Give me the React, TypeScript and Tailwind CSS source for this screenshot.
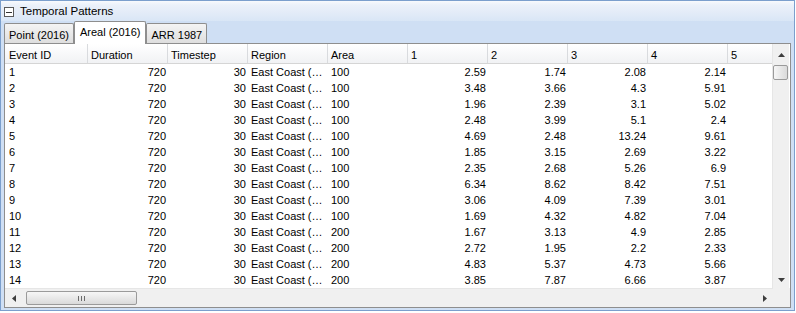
import React from 'react';

type Row = [number, number, string, string, string, string];

const rows: Row[] = [
    [1, 100, '2.59', '1.74', '2.08', '2.14'],
    [2, 100, '3.48', '3.66', '4.3', '5.91'],
    [3, 100, '1.96', '2.39', '3.1', '5.02'],
    [4, 100, '2.48', '3.99', '5.1', '2.4'],
    [5, 100, '4.69', '2.48', '13.24', '9.61'],
    [6, 100, '1.85', '3.15', '2.69', '3.22'],
    [7, 100, '2.35', '2.68', '5.26', '6.9'],
    [8, 100, '6.34', '8.62', '8.42', '7.51'],
    [9, 100, '3.06', '4.09', '7.39', '3.01'],
    [10, 100, '1.69', '4.32', '4.82', '7.04'],
    [11, 200, '1.67', '3.13', '4.9', '2.85'],
    [12, 200, '2.72', '1.95', '2.2', '2.33'],
    [13, 200, '4.83', '5.37', '4.73', '5.66'],
    [14, 200, '3.85', '7.87', '6.66', '3.87'],
];

const headers = ['Duration', 'Timestep', 'Region', 'Area', '1', '2', '3', '4', '5'];

const Arrow = ({ dir }: { dir: 'up' | 'down' | 'left' | 'right' }) => {
    const pts = {
        up: '0,4 7,4 3.5,0',
        down: '0,0 7,0 3.5,4',
        left: '4,0 4,7 0,3.5',
        right: '0,0 0,7 4,3.5',
    }[dir];
    const vertical = dir === 'up' || dir === 'down';
    return (
        <svg width={vertical ? 7 : 4} height={vertical ? 4 : 7} viewBox={vertical ? '0 0 7 4' : '0 0 4 7'}>
            <polygon points={pts} fill="#3d3d3d" />
        </svg>
    );
};

const Tab = ({ label, active }: { label: string; active?: boolean }) => (
    <div
        className={
            active
                ? 'h-[23px] -mb-px px-[5px] pt-[5px] bg-white border border-b-0 border-[#8e8e8e] rounded-t-[2px] z-10 relative'
                : 'h-[20px] px-[4px] pt-[6px] bg-[linear-gradient(to_bottom,#f4f4f4,#dedede)] border border-b-0 border-[#8e8e8e] rounded-t-[2px]'
        }
    >
        {label}
    </div>
);

export default function App() {
    return (
        <div className="w-[796px] h-[313px] bg-white text-[11px] text-black font-['Liberation_Sans',Arial,sans-serif] leading-none">
            <div className="w-[795px] h-[311px] border border-[#7b9fcd] flex flex-col bg-[#cfdff4]">
                {/* Title bar */}
                <div className="h-[20px] shrink-0 flex items-center gap-[6px] pl-[3px] pt-[2px] bg-[linear-gradient(to_bottom,#f8fafd_0%,#ebf1fa_20%,#e4ecf8_55%,#d9e6f6_100%)]">
                    <div className="w-[10px] h-[10px] border border-[#5a5a5a] bg-white flex items-center justify-center">
                        <div className="w-[6px] h-px bg-[#333]" />
                    </div>
                    <span className="text-[11.5px]">Temporal Patterns</span>
                </div>

                {/* Tabs + grid */}
                <div className="flex-1 flex flex-col px-[3px] pb-[2px]">
                    <div className="h-[22px] shrink-0 flex items-end">
                        <Tab label="Point (2016)" />
                        <Tab label="Areal (2016)" active />
                        <Tab label="ARR 1987" />
                    </div>

                    <div className="flex-1 border border-[#8e8e8e] bg-white flex flex-col">
                        <div className="flex flex-1 min-h-0">
                            {/* Table */}
                            <div className="w-[767px] overflow-hidden">
                                <div className="flex h-[20px] border-b border-[#d5d5d5] bg-[linear-gradient(to_bottom,#ffffff,#f1f2f4)]">
                                    <div className="w-[83px] shrink-0 border-r border-[#d9dbde] pl-[4px] pt-[6px]">Event ID</div>
                                    {headers.map((h) => (
                                        <div key={h} className="w-[80px] shrink-0 border-r border-[#d9dbde] pl-[3px] pt-[6px]">
                                            {h}
                                        </div>
                                    ))}
                                </div>
                                {rows.map(([id, area, a, b, c, d]) => (
                                    <div key={id} className="flex h-[16px] pt-[3px]">
                                        <div className="w-[83px] shrink-0 pl-[4px]">{id}</div>
                                        <div className="w-[80px] shrink-0 text-right pr-[2px]">720</div>
                                        <div className="w-[80px] shrink-0 text-right pr-[2px]">30</div>
                                        <div className="w-[80px] shrink-0 pl-[3px] whitespace-nowrap">East Coast (…</div>
                                        <div className="w-[80px] shrink-0 pl-[3px]">{area}</div>
                                        <div className="w-[80px] shrink-0 text-right pr-[2px]">{a}</div>
                                        <div className="w-[80px] shrink-0 text-right pr-[2px]">{b}</div>
                                        <div className="w-[80px] shrink-0 text-right pr-[2px]">{c}</div>
                                        <div className="w-[80px] shrink-0 text-right pr-[2px]">{d}</div>
                                        <div className="w-[80px] shrink-0" />
                                    </div>
                                ))}
                            </div>

                            {/* Vertical scrollbar */}
                            <div className="w-[17px] shrink-0 bg-[#f0f0f0] border-l border-[#e6e6e6] flex flex-col">
                                <div className="h-[21px] flex items-center justify-center">
                                    <Arrow dir="up" />
                                </div>
                                <div className="h-[15px] mr-[1px] border border-[#9a9a9a] rounded-[2px] bg-[linear-gradient(to_right,#f6f6f6,#dadada)]" />
                                <div className="flex-1" />
                                <div className="h-[17px] flex items-center justify-center">
                                    <Arrow dir="down" />
                                </div>
                            </div>
                        </div>

                        {/* Horizontal scrollbar */}
                        <div className="h-[19px] shrink-0 flex">
                            <div className="flex-1 flex items-center bg-[#f0f0f0] border-t border-[#e6e6e6]">
                                <div className="w-[17px] flex items-center justify-center">
                                    <Arrow dir="left" />
                                </div>
                                <div className="ml-[4px] w-[111px] h-[14px] border border-[#9a9a9a] rounded-[2px] bg-[linear-gradient(to_bottom,#f6f6f6,#dadada)] flex items-center justify-center gap-[2px]">
                                    <div className="w-px h-[5px] bg-[#6b6b6b]" />
                                    <div className="w-px h-[5px] bg-[#6b6b6b]" />
                                    <div className="w-px h-[5px] bg-[#6b6b6b]" />
                                </div>
                                <div className="flex-1" />
                                <div className="w-[17px] flex items-center justify-center">
                                    <Arrow dir="right" />
                                </div>
                            </div>
                            <div className="w-[17px] bg-[#f0f0f0]" />
                        </div>
                    </div>
                </div>
            </div>
        </div>
    );
}
